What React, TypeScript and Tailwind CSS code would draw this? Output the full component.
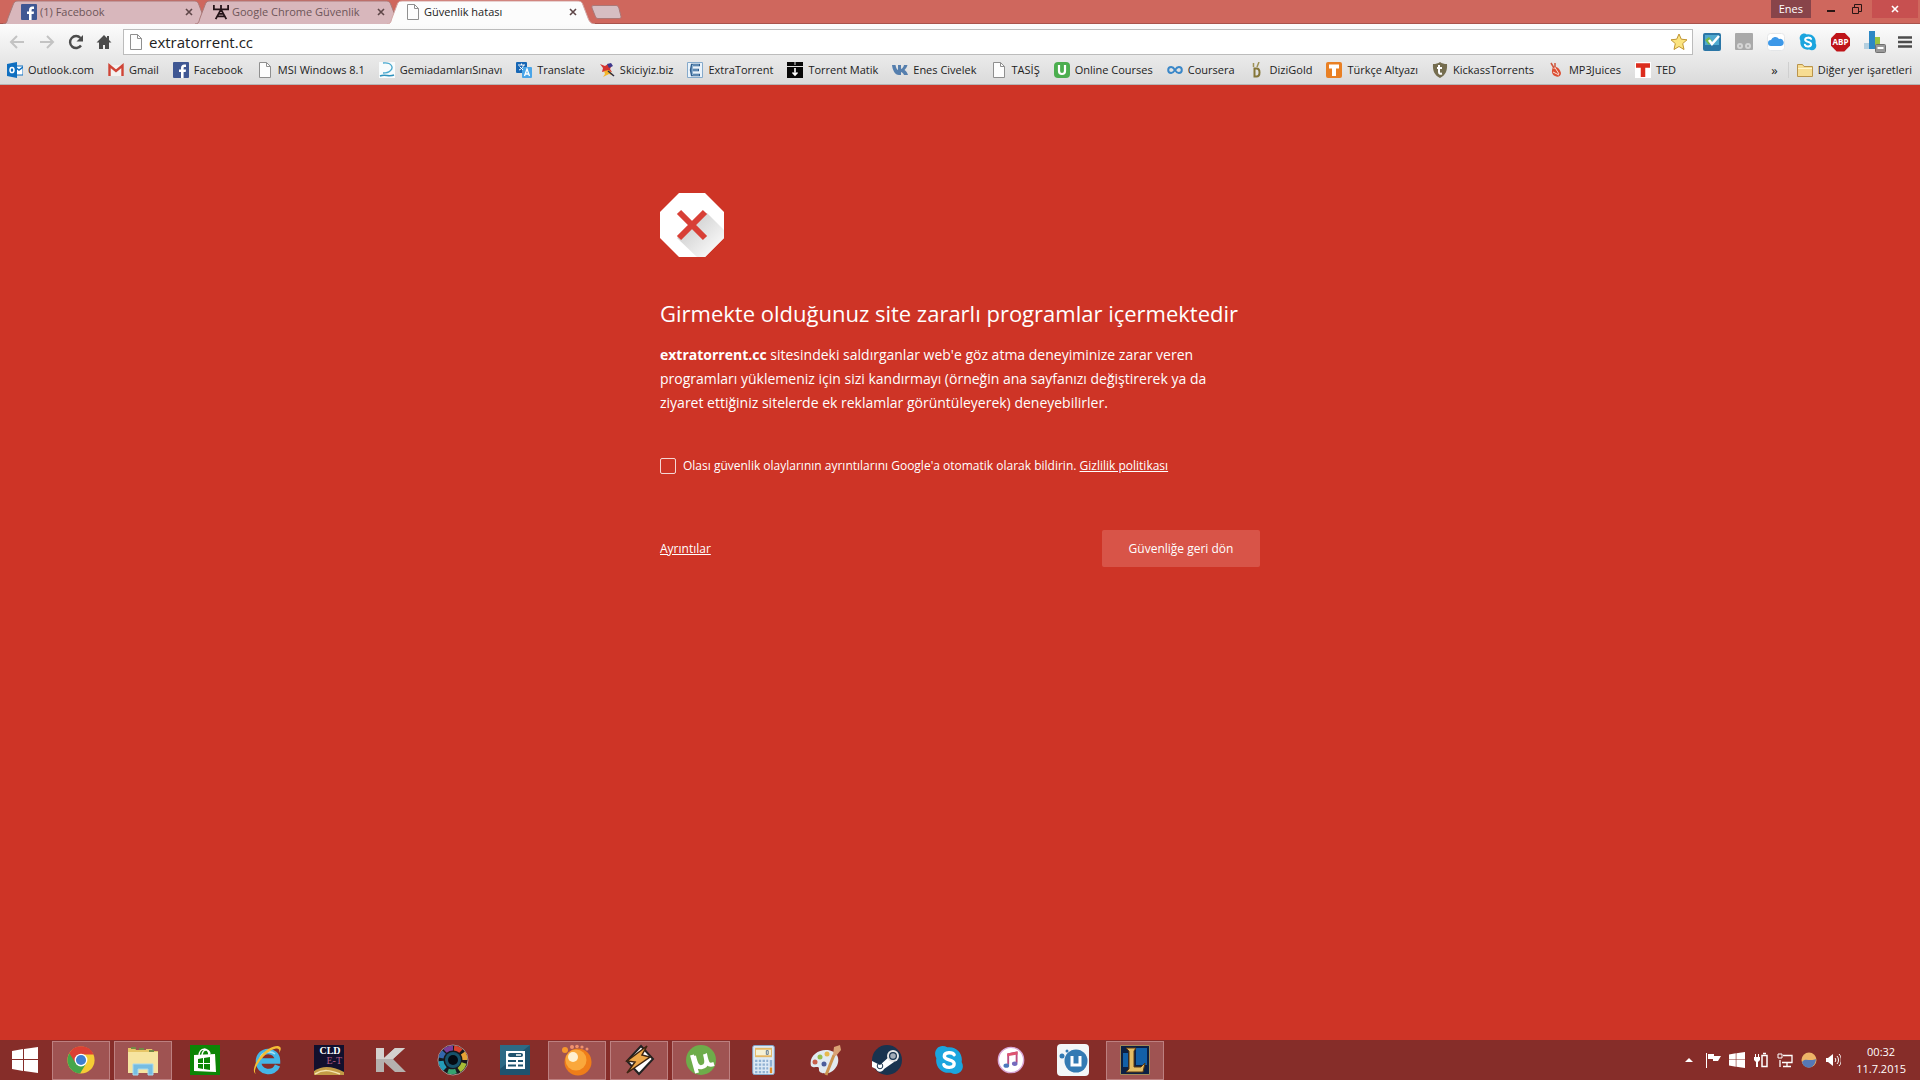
import type { ReactNode } from 'react';

type IconProps = { children: ReactNode; box?: string; className?: string };

function Icon({ children, box = '0 0 16 16', className = 'size-4' }: IconProps) {
    return (
        <svg viewBox={box} className={`shrink-0 ${className}`} fill="none" aria-hidden="true">
            {children}
        </svg>
    );
}

function PageIcon() {
    return (
        <Icon>
            <path d="M2.5 .5h7l4 4v11h-11z" fill="#fdfdfd" stroke="#8f8f8f" />
            <path d="M9.5 .5v4h4" stroke="#8f8f8f" />
        </Icon>
    );
}

function FacebookIcon() {
    return (
        <Icon>
            <rect width="16" height="16" rx="1" fill="#3f5793" />
            <path d="M8 16V10H6V7.500h2V6c0-2.300 1.300-3.500 3.300-3.500H13V5h-1.200c-.9 0-1.200.4-1.200 1.200v1.300H13L12.700 10h-2.100v6z" fill="#fff" />
        </Icon>
    );
}

function TowerIcon() {
    return (
        <Icon box="0 0 18 18">
            <path d="M1 1v5h16V1M9 1v6M9 6 3 17M9 6l6 11M6 11h6M4 14h10" stroke="#251418" strokeWidth="2" />
        </Icon>
    );
}

const bookmarks: { label: string; icon: ReactNode }[] = [
    {
        label: 'Outlook.com',
        icon: (
            <Icon>
                <path d="M8 4h8v9H8z" fill="#fff" stroke="#0f6fc0" />
                <path d="m8 5 4 3 4-3" stroke="#0f6fc0" strokeWidth="1.500" />
                <path d="M0 2 10 0v16L0 14z" fill="#0f6fc0" />
                <ellipse cx="5" cy="8" rx="2" ry="2.600" stroke="#fff" strokeWidth="1.500" />
            </Icon>
        ),
    },
    {
        label: 'Gmail',
        icon: (
            <Icon>
                <path d="M1 3h14v11H1z" fill="#f4f1f0" />
                <path d="M1.500 14V3.500L8 9l6.500-5.500V14" stroke="#cf4436" strokeWidth="2.400" />
            </Icon>
        ),
    },
    { label: 'Facebook', icon: <FacebookIcon /> },
    { label: 'MSI Windows 8.1', icon: <PageIcon /> },
    {
        label: 'GemiadamlarıSınavı',
        icon: (
            <Icon>
                <path d="M0 0h16v16H0z" fill="#f8fbfc" />
                <path d="M4 1c9-1 11 5 7 8-2 2-5 2-7 2" stroke="#49a9cf" strokeWidth="1.300" />
                <path d="M1 14c5-2 9 1 14-1" stroke="#2f92bd" strokeWidth="1.500" />
            </Icon>
        ),
    },
    {
        label: 'Translate',
        icon: (
            <Icon>
                <rect width="11" height="11" rx="1" fill="#1767b5" />
                <rect x="6" y="5" width="10" height="11" rx="1" fill="#4aa5e8" />
                <path d="M2 3h7M5.500 1.500V3M3 8c3-1 4-3 4.500-5M3.500 4.500 7 8" stroke="#fff" />
                <path d="m8.500 14 2.500-7 2.500 7M9.500 12h3.500" stroke="#fff" strokeWidth="1.300" />
            </Icon>
        ),
    },
    {
        label: 'Skiciyiz.biz',
        icon: (
            <Icon>
                <path d="m1 2 5 2 3-2 4 1-2 4 2 3-6-1-4 1 1-4z" fill="#d5332f" />
                <path d="m8 2 4-1 2 3-4 2z" fill="#3f3a8c" />
                <path d="m5 9 5-1 5 6-5-2-6 3 2-3z" fill="#f3b52b" />
                <path d="m9 9 6 5" stroke="#2b2b45" strokeWidth="1.500" />
            </Icon>
        ),
    },
    {
        label: 'ExtraTorrent',
        icon: (
            <Icon>
                <path d="M.5 .5h15v15H.5z" fill="#eaf3fb" stroke="#86aacb" />
                <path d="M13 3H5l-1 5 1 5h8M4 8h8" stroke="#2d5c8c" strokeWidth="2.400" />
                <path d="M12 3H5.500L5 8l.5 5H12M5 8h6" stroke="#a8cbe9" strokeWidth=".8" />
            </Icon>
        ),
    },
    {
        label: 'Torrent Matik',
        icon: (
            <Icon>
                <path d="M0 0h16v16H0z" fill="#080808" />
                <path d="M0 4.500h16M8 0v3" stroke="#ddd" />
                <path d="M8 6v7M5.500 10.500 8 13l2.500-2.500" stroke="#fff" strokeWidth="1.600" />
            </Icon>
        ),
    },
    {
        label: 'Enes Civelek',
        icon: (
            <Icon>
                <path d="M0 3h3.500c.5 3 1.500 4.500 2.500 5V3h3v4c1.500-.5 2.500-2 3-4h3.500c-.5 2-2 4-3 5 1.300.8 2.700 2.500 3.500 5h-4c-.5-1.500-1.500-2.500-3-3v3H7C3 13 .5 8 0 3z" fill="#557fae" />
            </Icon>
        ),
    },
    { label: 'TASİŞ', icon: <PageIcon /> },
    {
        label: 'Online Courses',
        icon: (
            <Icon>
                <rect width="16" height="16" rx="4" fill="#4cae4f" />
                <path d="M5 3v6a3 3 0 0 0 6 0V3" stroke="#fff" strokeWidth="2.200" />
            </Icon>
        ),
    },
    {
        label: 'Coursera',
        icon: (
            <Icon>
                <path d="M8 8C6.500 5.500 5.500 5 4.200 5a3 3 0 0 0 0 6C6 11 7 9.500 8 8s2-3 3.800-3a3 3 0 0 1 0 6C10.500 11 9.500 10.500 8 8z" stroke="#3a87c8" strokeWidth="2" />
            </Icon>
        ),
    },
    {
        label: 'DiziGold',
        icon: (
            <Icon>
                <path d="M5.500 6.500h2c4 0 4 8 0 8h-2z" stroke="#857638" strokeWidth="2" />
                <path d="M4.500 1v4M10 0 8 5" stroke="#9e9256" strokeWidth="1.500" />
            </Icon>
        ),
    },
    {
        label: 'Türkçe Altyazı',
        icon: (
            <Icon>
                <rect width="16" height="16" rx="2" fill="#e98024" />
                <path d="M3 4.500h10M8 4v10" stroke="#fff" strokeWidth="4" />
            </Icon>
        ),
    },
    {
        label: 'KickassTorrents',
        icon: (
            <Icon>
                <path d="M8 0c2 1.500 4 2 7 2 .5 6-1 11-7 14C2 13 .5 8 1 2c3 0 5-.5 7-2z" fill="#756d4f" />
                <path d="M7 3v7c0 1.500 1 2 3 1.500M5 6h5" stroke="#fff" strokeWidth="2" />
            </Icon>
        ),
    },
    {
        label: 'MP3Juices',
        icon: (
            <Icon>
                <path d="M5 5c4-1 7 2 8 6 0 3-3 5-6 3-3-1-4-5-2-9z" fill="#dc4e32" />
                <path d="M6 7V4l5 8M5 10l6 3" stroke="#fbe1d8" />
                <path d="M3 1 6 6M7 1v4" stroke="#cf563c" strokeWidth="1.500" />
            </Icon>
        ),
    },
    {
        label: 'TED',
        icon: (
            <Icon>
                <path d="M0 0h16v16H0z" fill="#fff" />
                <path d="M1 3.500h14M8 3v12" stroke="#dc2d1e" strokeWidth="4.500" />
            </Icon>
        ),
    },
];

function ChromeIcon() {
    return (
        <Icon box="0 0 32 32" className="size-[30px]">
            <circle cx="16" cy="16" r="14.500" fill="#f5cc35" />
            <path d="M16 16 3.500 8.700A14.500 14.500 0 0 0 15 30.500l6.500-10.800z" fill="#45a64a" />
            <path d="M3.500 8.700a14.500 14.500 0 0 1 26 1.300H16l-6.500 8z" fill="#dc4034" />
            <circle cx="16" cy="16" r="6.800" fill="#fff" />
            <circle cx="16" cy="16" r="5.400" fill="#3f7fd0" />
        </Icon>
    );
}

function SkypeIcon({ className }: { className: string }) {
    return (
        <Icon box="0 0 32 32" className={className}>
            <path d="M9 1a8 8 0 0 1 5 1.500C24 1 31 9 29.500 18 34 26 26 34 18 29.500 8 31 1 23 2.500 14-1 8 3 1 9 1z" fill="#1ba5de" />
            <path d="M21.500 10.500C20 7.500 11 7 11 12c0 5 10.500 2.500 10.500 8 0 5-9.500 5-11 1" stroke="#fff" strokeWidth="3.600" strokeLinecap="round" />
        </Icon>
    );
}

const taskbarApps: { name: string; running?: boolean; icon: ReactNode }[] = [
    { name: 'Google Chrome', running: true, icon: <ChromeIcon /> },
    {
        name: 'File Explorer',
        running: true,
        icon: (
            <Icon box="0 0 32 32" className="size-8">
                <path d="M1 4h7l1 2h10V5h6l1 2h5v21H1z" fill="#e7c667" />
                <path d="M4 3h5v2H4zM12 4h5v2h-5zM22 6h5v2h-5z" fill="#738845" />
                <path d="M1 8h30v21H1z" fill="#f6e4a0" />
                <path d="M6 31V20h20v11h-5v-6H11v6z" fill="#76bde2" stroke="#a9daef" />
            </Icon>
        ),
    },
    {
        name: 'Store',
        icon: (
            <Icon box="0 0 32 32" className="size-8">
                <path d="M1 1h30v30H1z" fill="#0c8506" />
                <path d="m5 11 21-1 1 18-22-1z" fill="#fff" />
                <path d="M10 12c0-9 10-9 10-1M13 11c1-7 7-6 8-1" stroke="#fff" strokeWidth="1.500" />
                <path d="m9 15 5-1v5H9zm6-1 6-1v6h-6zm-6 6h5v5l-5-1zm6 0h6v6l-6-1z" fill="#0c8506" />
            </Icon>
        ),
    },
    {
        name: 'Internet Explorer',
        icon: (
            <Icon box="0 0 32 32" className="size-8">
                <path d="M26.500 21.500C23 31 7.500 29 7.500 17.500c0-13 19-13.500 19-.5H10" stroke="#45b5e6" strokeWidth="5.500" />
                <path d="M9 14c2-6 10-8 15-4" stroke="#a5e2f7" strokeWidth="1.500" />
                <path d="M5 30C-3 27 13 1 27 2c4 1 3 4 1 7 1-3 0-5-3-4.500C15 6 0 26 5 30z" fill="#f5bd35" />
            </Icon>
        ),
    },
    {
        name: 'CLD E-T',
        icon: (
            <span className="flex size-[30px] flex-col bg-[#12102d] font-['Liberation_Serif',serif] text-[10px] leading-[10px]">
                <span className="pl-[2px] pt-px font-bold text-white">CLD</span>
                <span className="pr-[2px] text-right text-[#b45a82]">E-T</span>
                <Icon box="0 0 30 9" className="h-[9px] w-[30px]">
                    <path d="M0 5C9-1 18 0 30 6v3H0z" fill="#c39b45" />
                    <path d="M1 8c8-5 15-4 25 0" stroke="#f4e3ae" strokeWidth="1.500" />
                </Icon>
            </span>
        ),
    },
    {
        name: 'K',
        icon: (
            <Icon box="0 0 32 32" className="size-8">
                <path d="M1 4h8v10L20 4h10L18 15l13 13H20L9 18v10H1z" fill="#b5b1ae" />
                <path d="M1 4h8v10L20 4h10L18 15H1z" fill="#d4d1ce" />
            </Icon>
        ),
    },
    {
        name: 'Color wheel',
        icon: (
            <Icon box="0 0 32 32" className="size-8">
                <circle cx="16" cy="16" r="15" fill="#16171d" stroke="#ddd" strokeWidth=".6" />
                <path d="M8 7a12 12 0 0 1 8-3" stroke="#7b3c98" strokeWidth="5" />
                <path d="M17 4a12 12 0 0 1 7 3" stroke="#d7402c" strokeWidth="5" />
                <path d="M26 9a12 12 0 0 1 2 7" stroke="#e8a235" strokeWidth="5" />
                <path d="M27 19a12 12 0 0 1-5 7" stroke="#a6bb36" strokeWidth="5" />
                <path d="M19 27a12 12 0 0 1-8 0" stroke="#37a270" strokeWidth="5" />
                <path d="M8 25a12 12 0 0 1-4-8" stroke="#249cb8" strokeWidth="5" />
                <path d="M4 14a12 12 0 0 1 3-6" stroke="#3266ad" strokeWidth="5" />
                <circle cx="16" cy="16" r="8" fill="#17526b" />
                <circle cx="16" cy="16" r="5" fill="#050a12" />
            </Icon>
        ),
    },
    {
        name: 'Control panel',
        icon: (
            <Icon box="0 0 32 32" className="size-8">
                <path d="M1 1h30v30H1z" fill="#1f536e" />
                <path d="M1 1h30L1 25z" fill="#2d6a85" />
                <path d="M7 7h19v18H7z" fill="#fff" />
                <rect x="9" y="9" width="15" height="4" rx="2" fill="#1f536e" />
                <path d="M17 11h5" stroke="#fff" strokeWidth="1.500" />
                <path d="M9 17h8M9 21.500h8M19 17h5M19 21.500h5" stroke="#1f536e" strokeWidth="2" />
            </Icon>
        ),
    },
    {
        name: 'GOM Player',
        running: true,
        icon: (
            <Icon box="0 0 32 32" className="size-8">
                <circle cx="4" cy="6" r="3" fill="#f6962d" />
                <circle cx="11" cy="3" r="2" fill="#f2916d" />
                <circle cx="16" cy="2.500" r="1.800" fill="#f2916d" />
                <circle cx="21" cy="3" r="1.600" fill="#f2916d" />
                <circle cx="26" cy="5" r="1.500" fill="#f2916d" />
                <circle cx="17" cy="18" r="13.500" fill="#ef7d19" />
                <circle cx="15" cy="16" r="10.500" fill="#faa83c" />
                <circle cx="12" cy="13" r="5" fill="#fff0cf" />
            </Icon>
        ),
    },
    {
        name: 'Winamp',
        running: true,
        icon: (
            <Icon box="0 0 32 32" className="size-8">
                <path d="M18 2 30 15 16 30 4 17z" fill="#fff" stroke="#222" strokeWidth="2" />
                <path d="M24 2 4 17l8 1-8 11 23-16-8-2z" fill="#eda747" stroke="#3c2411" strokeWidth="1.500" />
            </Icon>
        ),
    },
    {
        name: 'uTorrent',
        running: true,
        icon: (
            <Icon box="0 0 32 32" className="size-8">
                <circle cx="16" cy="16" r="15" fill="#6eac4a" />
                <path d="m7 11 5 18M9 12c2 9 4 12 8 11 5-1 5-5 3-13M20 10c2 10 3 12 9 10" stroke="#fff" strokeWidth="4" />
            </Icon>
        ),
    },
    {
        name: 'Calculator',
        icon: (
            <Icon box="0 0 24 32" className="h-[30px] w-[23px]">
                <rect x=".5" y=".5" width="23" height="31" rx="2" fill="#dce9f5" stroke="#80a9d0" />
                <path d="M3 3h18v10H3z" fill="#e5b663" />
                <path d="M4 5h16v6H4z" fill="#f6f1d4" />
                <path d="M15 6h2v4h-2z" stroke="#56738f" />
                <path d="M3 17h14M3 21h14M3 25h14M3 29h14" stroke="#8fb0d2" strokeWidth="2.400" strokeDasharray="2.500 1.500" />
                <path d="M20 16v7" stroke="#8fb0d2" strokeWidth="2.500" />
                <path d="M20 24v6" stroke="#e08d2d" strokeWidth="2.500" />
            </Icon>
        ),
    },
    {
        name: 'Paint',
        icon: (
            <Icon box="0 0 32 32" className="size-8">
                <path d="M2 22C-1 10 14 2 25 8c7 4 5 16-3 20-6 3-13 1-12-3 0-4-5 0-8-3z" fill="#e1eaf0" />
                <circle cx="6" cy="18" r="2.500" fill="#c8604b" />
                <circle cx="11" cy="13" r="2.500" fill="#96bd4c" />
                <circle cx="18" cy="10" r="2.500" fill="#e6b94c" />
                <circle cx="15" cy="20" r="2.500" fill="#4b5d9a" />
                <path d="m17 31 8-20" stroke="#cc9550" strokeWidth="3" />
                <path d="m24 11 1-8 6-2 1 5-5 6z" fill="#d9a274" />
            </Icon>
        ),
    },
    {
        name: 'Steam',
        icon: (
            <Icon box="0 0 32 32" className="size-8">
                <circle cx="16" cy="16" r="15" fill="#19334f" />
                <path d="m1 17 8 4 10-9 4 6-10 7c-2 4-7 3-8 0l-4-2z" fill="#fff" />
                <circle cx="22" cy="12" r="6" fill="#e6e6e6" />
                <circle cx="22" cy="12" r="4" fill="#19334f" />
                <circle cx="22" cy="12" r="2.800" fill="#a3acb7" />
                <circle cx="9" cy="22" r="2.800" stroke="#19334f" />
            </Icon>
        ),
    },
    { name: 'Skype', icon: <SkypeIcon className="size-[30px]" /> },
    {
        name: 'iTunes',
        icon: (
            <Icon box="0 0 32 32" className="size-[30px]">
                <circle cx="16" cy="16" r="13.500" fill="#fff" stroke="#d7a5d5" strokeWidth="1.500" />
                <path d="M13 21v-11l9-2v11" stroke="#b94f83" strokeWidth="2" />
                <path d="m12 9 11-2v3l-11 2z" fill="#de5370" />
                <ellipse cx="11" cy="22" rx="3" ry="2.300" fill="#4b79bd" />
                <ellipse cx="20" cy="20" rx="3" ry="2.300" fill="#756abd" />
            </Icon>
        ),
    },
    {
        name: 'uCoz',
        icon: (
            <Icon box="0 0 32 32" className="size-8">
                <rect width="32" height="32" rx="4" fill="#f3f6f8" />
                <circle cx="19" cy="17" r="11.500" fill="#337ab3" />
                <circle cx="5" cy="12" r="2.500" fill="#337ab3" />
                <circle cx="10" cy="7" r="1.500" fill="#337ab3" />
                <path d="M15 12v9h8v-9" stroke="#fff" strokeWidth="3" />
            </Icon>
        ),
    },
    {
        name: 'League of Legends',
        running: true,
        icon: (
            <Icon box="0 0 32 32" className="size-8">
                <path d="M1.500 1.500h29v29h-29z" fill="#0b2044" stroke="#a58a58" />
                <path d="M17 4h11v17H17zM4 9h5v14H4z" fill="#1260a8" />
                <path d="M7 4h10l-2 3v16h7l4-4-2 9H7l3-3V7z" fill="#e4bd64" stroke="#5c3a12" />
            </Icon>
        ),
    },
];

const tabs: { title: string; icon: ReactNode; active?: boolean }[] = [
    { title: '(1) Facebook', icon: <FacebookIcon /> },
    { title: 'Google Chrome Güvenlik', icon: <TowerIcon /> },
    { title: 'Güvenlik hatası', icon: <PageIcon />, active: true },
];

function TabStrip() {
    return (
        <div className="flex h-6 items-end border-b border-[#a9534c] bg-[#cf675d] pl-[3px]">
            {tabs.map((tab) => (
                <div
                    key={tab.title}
                    className={`relative -mb-px -mr-4 flex h-6 w-[208px] items-center gap-[3px] pl-[18px] pr-[18px] ${tab.active ? 'z-10' : ''}`}
                >
                    <svg viewBox="0 0 208 24" className="absolute inset-0 size-full" preserveAspectRatio="none" aria-hidden="true">
                        <path
                            d="M0 24C4 24 4 21 5 18L10 5C11 2 12 1 15 1H190C194 1 195 2 196 5L201 18C202 21 204 24 208 24"
                            fill={tab.active ? '#fcfcfc' : '#d8b7bc'}
                            stroke={tab.active ? '#d3a5a3' : '#a97978'}
                        />
                    </svg>
                    <span className="relative">{tab.icon}</span>
                    <button
                        type="button"
                        className={`relative min-w-0 flex-1 overflow-hidden whitespace-nowrap text-left text-[11px] leading-5 ${tab.active ? 'text-[#222]' : 'text-[#6d5558]'}`}
                    >
                        {tab.title}
                    </button>
                    <button type="button" aria-label="Sekmeyi kapat" className="relative">
                        <Icon box="0 0 8 8" className="size-2">
                            <path d="m1 1 6 6M7 1 1 7" stroke="#5e4648" strokeWidth="1.600" />
                        </Icon>
                    </button>
                </div>
            ))}
            <button type="button" aria-label="Yeni sekme" className="mb-1 ml-3">
                <Icon box="0 0 31 14" className="h-[14px] w-[31px]">
                    <path d="M3 .5h22c2 0 2 1 3 3l2 8c0 1 0 2-2 2H7c-2 0-2-1-3-3L1 3C.5 1 1 .5 3 .5z" fill="#d6bdc2" stroke="#ab7776" />
                </Icon>
            </button>
            <div className="ml-auto flex items-start self-start pr-[2px]">
                <button type="button" className="mr-[6px] h-[18px] bg-[#88444a] px-2 text-[11px] leading-[18px] text-white">
                    Enes
                </button>
                <button type="button" aria-label="Küçült" className="flex h-[18px] w-7 items-center justify-center">
                    <span className="mt-1 h-[2px] w-2 bg-[#2a1614]" />
                </button>
                <button type="button" aria-label="Önceki boyut" className="mr-[3px] flex h-[18px] w-6 items-center justify-center">
                    <Icon box="0 0 10 10" className="size-[10px]">
                        <path d="M.5 3.500h6v6h-6zM2.500 3V.5h7v7H7" stroke="#2a1614" />
                    </Icon>
                </button>
                <button type="button" aria-label="Kapat" className="flex h-[18px] w-[46px] items-center justify-center bg-[#c75050]">
                    <Icon box="0 0 8 8" className="size-2">
                        <path d="m1 1 6 6M7 1 1 7" stroke="#fff" strokeWidth="1.600" />
                    </Icon>
                </button>
            </div>
        </div>
    );
}

const extensions: { name: string; icon: ReactNode }[] = [
    {
        name: 'Checker',
        icon: (
            <Icon box="0 0 18 18" className="size-[18px]">
                <rect width="18" height="18" rx="2" fill="#2b76a6" />
                <path d="M2 2h14v10H2z" fill="#4fa9cf" />
                <path d="m2 7 4-3 3 4-3 4z" fill="#77ba4a" />
                <path d="m6 7 3 4 7-8" stroke="#fff" strokeWidth="2.600" />
            </Icon>
        ),
    },
    {
        name: 'Tampermonkey',
        icon: (
            <Icon box="0 0 18 18" className="size-[18px]">
                <rect width="18" height="17" rx="1" fill="#a9a9a9" />
                <circle cx="5" cy="13" r="3" fill="#d5d5d5" />
                <circle cx="13" cy="13" r="3" fill="#d5d5d5" />
                <circle cx="5" cy="13" r="1" fill="#a9a9a9" />
                <circle cx="13" cy="13" r="1" fill="#a9a9a9" />
            </Icon>
        ),
    },
    {
        name: 'iCloud',
        icon: (
            <Icon box="0 0 18 18" className="size-[18px]">
                <rect x=".5" y=".5" width="17" height="17" rx="3" fill="#fff" stroke="#e4e6e8" />
                <path d="M4 13a3 3 0 0 1 0-6 4.500 4.500 0 0 1 8-1 3.600 3.600 0 0 1 2 7z" fill="#3d98e8" />
            </Icon>
        ),
    },
    { name: 'Skype', icon: <SkypeIcon className="size-[18px]" /> },
    {
        name: 'Adblock Plus',
        icon: (
            <span className="flex size-[19px] items-center justify-center bg-[#bf1419] text-[8px] font-bold text-white [clip-path:polygon(30%_0,70%_0,100%_30%,100%_70%,70%_100%,30%_100%,0_70%,0_30%)]">
                ABP
            </span>
        ),
    },
    {
        name: 'Statistics',
        icon: (
            <Icon box="0 0 22 22" className="size-[22px]">
                <path d="M0 12h5v6H0z" fill="#b4cfdf" />
                <path d="M5 0h6v18H5z" fill="#2d88c4" />
                <path d="M11 6h5v12h-5z" fill="#9bc342" />
                <rect x="11.500" y="13.500" width="10" height="8" rx="1" fill="#999" stroke="#707070" />
                <path d="M13.500 17h6" stroke="#fff" strokeWidth="2" />
            </Icon>
        ),
    },
];

function Toolbar() {
    return (
        <div className="flex h-9 items-center pl-[9px] pr-2">
            <button type="button" aria-label="Geri">
                <Icon>
                    <path d="M15 8H2m6-6L2 8l6 6" stroke="#c3c3c3" strokeWidth="2" />
                </Icon>
            </button>
            <button type="button" aria-label="İleri" className="ml-[14px]">
                <Icon>
                    <path d="M1 8h13M8 2l6 6-6 6" stroke="#c3c3c3" strokeWidth="2" />
                </Icon>
            </button>
            <button type="button" aria-label="Yenile" className="ml-[13px]">
                <Icon>
                    <path d="M13 11.500a6 6 0 1 1-.5-7.500" stroke="#4c4c4c" strokeWidth="2.400" />
                    <path d="M15 1v6.500H8.500z" fill="#4c4c4c" />
                </Icon>
            </button>
            <button type="button" aria-label="Ana sayfa" className="ml-3">
                <Icon>
                    <path d="M8 1 .5 8.500H3V15h4v-4h2v4h4V8.500h2.500L13 6V2h-2v2z" fill="#4c4c4c" />
                </Icon>
            </button>
            <div className="ml-[11px] flex h-[26px] flex-1 items-center gap-[5px] border border-[#bcbcbc] bg-white pl-1 pr-1">
                <PageIcon />
                <input
                    type="text"
                    aria-label="Adres"
                    defaultValue="extratorrent.cc"
                    className="min-w-0 flex-1 bg-transparent text-[15px] leading-6 text-[#222] outline-none"
                />
                <button type="button" aria-label="Yer işareti">
                    <Icon box="0 0 18 18" className="size-[18px]">
                        <path d="m9 1 2.300 5.200 5.700.6-4.300 3.800 1.300 5.900L9 13.500l-5 3 1.300-5.900L1 6.800l5.700-.6z" fill="#fbe480" stroke="#c29632" />
                    </Icon>
                </button>
            </div>
            <div className="ml-[10px] flex items-center gap-[14px]">
                {extensions.map((ext) => (
                    <button key={ext.name} type="button" aria-label={ext.name}>
                        {ext.icon}
                    </button>
                ))}
            </div>
            <button type="button" aria-label="Menü" className="ml-3">
                <Icon box="0 0 14 14" className="size-[14px]">
                    <path d="M0 2.500h14M0 7h14M0 11.500h14" stroke="#4c4c4c" strokeWidth="2.600" />
                </Icon>
            </button>
        </div>
    );
}

function BookmarksBar() {
    return (
        <nav className="flex h-[25px] items-center border-b border-[#b4b4b4] pb-1 pl-[7px] pr-2 text-[11px] leading-4 text-[#222]">
            <div className="flex items-center gap-[14px]">
                {bookmarks.map((item) => (
                    <a key={item.label} href="#" className="flex items-center gap-[5px] whitespace-nowrap">
                        {item.icon}
                        {item.label}
                    </a>
                ))}
            </div>
            <button type="button" className="ml-auto mr-[10px] text-[13px]">
                »
            </button>
            <a href="#" className="flex items-center gap-[5px] whitespace-nowrap border-l border-[#cfcfcf] pl-2">
                <Icon>
                    <path d="M.5 14.500v-12h5l1.500 2h8.500v10z" fill="#f7dc92" stroke="#ba944b" />
                    <path d="M1 6.500h14" stroke="#fff3cb" />
                </Icon>
                Diğer yer işaretleri
            </a>
        </nav>
    );
}

function SecurityWarning() {
    return (
        <main className="flex flex-1 justify-center bg-[#ce3426] pt-[108px] text-white">
            <div className="w-full max-w-[600px]">
                <Icon box="0 0 64 64" className="size-16">
                    <defs>
                        <linearGradient id="cross-shadow" x1="24" y1="24" x2="56" y2="56" gradientUnits="userSpaceOnUse">
                            <stop stopColor="#c9c9c9" />
                            <stop offset="1" stopColor="#f7f7f7" />
                        </linearGradient>
                    </defs>
                    <path d="M19 0h26l19 19v26L45 64H19L0 45V19z" fill="#fff" />
                    <path d="m47 20 17 17v8L45 64h-8L17 45z" fill="url(#cross-shadow)" />
                    <path d="m19 19 26 26M45 19 19 45" stroke="#d83f36" strokeWidth="6" />
                </Icon>
                <h1 className="mt-10 text-[22px] leading-8">Girmekte olduğunuz site zararlı programlar içermektedir</h1>
                <p className="mt-[14px] pr-4 text-[14px] leading-6">
                    <strong>extratorrent.cc</strong> sitesindeki saldırganlar web'e göz atma deneyiminize zarar veren programları yüklemeniz için
                    sizi kandırmayı (örneğin ana sayfanızı değiştirerek ya da ziyaret ettiğiniz sitelerde ek reklamlar görüntüleyerek)
                    deneyebilirler.
                </p>
                <div className="mt-[41px] flex items-center gap-[7px] text-[12px] leading-5">
                    <input id="report" type="checkbox" className="size-4 appearance-none rounded-[2px] border border-white/80" />
                    <label htmlFor="report">
                        Olası güvenlik olaylarının ayrıntılarını Google'a otomatik olarak bildirin.{' '}
                        <a href="#" className="underline">
                            Gizlilik politikası
                        </a>
                    </label>
                </div>
                <div className="mt-[54px] flex items-center justify-between text-[12px] leading-5">
                    <a href="#" className="underline">
                        Ayrıntılar
                    </a>
                    <button type="button" className="h-[37px] min-w-[158px] rounded-[2px] bg-[#d85448] px-6">
                        Güvenliğe geri dön
                    </button>
                </div>
            </div>
        </main>
    );
}

function WindowsLogo({ className }: { className: string }) {
    return (
        <Icon box="0 0 26 26" className={className}>
            <path d="m0 4 11-2v10H0zm12-2 14-2v12H12zM0 13h11v11L0 22zm12 0h14v13l-14-2z" fill="#fff" />
        </Icon>
    );
}

function Taskbar() {
    return (
        <footer className="flex h-10 items-center bg-[#862d29]">
            <button type="button" aria-label="Başlat" className="flex w-[52px] justify-center pr-[2px]">
                <WindowsLogo className="size-[26px]" />
            </button>
            <div className="flex items-center gap-1">
                {taskbarApps.map((app) => (
                    <button
                        key={app.name}
                        type="button"
                        aria-label={app.name}
                        className={`flex h-[39px] w-[58px] items-center justify-center ${app.running ? 'border border-[#bd8080] bg-[#9f5352]' : ''}`}
                    >
                        {app.icon}
                    </button>
                ))}
            </div>
            <div className="ml-auto flex items-center gap-2 pr-[14px] text-white">
                <Icon>
                    <path d="m4 10 4-4 4 4z" fill="#fff" />
                </Icon>
                <Icon>
                    <path d="M1.500 1v15" stroke="#fff" />
                    <path d="M3 2h6v2h7l-3 5H8V7H3z" fill="#fff" />
                </Icon>
                <WindowsLogo className="size-4" />
                <Icon>
                    <path d="M2.500 2v3M5.500 2v3" stroke="#fff" />
                    <path d="M1 5h6v3L5 10v5H3v-5L1 8z" fill="#fff" />
                    <path d="M9 3.500h5v11H9zM10 1.500h3" stroke="#fff" strokeWidth="1.500" />
                </Icon>
                <Icon>
                    <path d="M6 3.500h9v7H5M10 11v3M6 14.500h8M3 8v7" stroke="#fff" strokeWidth="1.300" />
                    <path d="M1 2h4v4H1z" stroke="#fff" />
                </Icon>
                <Icon>
                    <circle cx="8" cy="8" r="7.500" fill="#eeb367" />
                    <path d="M1 10c3-5 8 0 14-3-1 11-12 11-14 3z" fill="#5679b7" />
                </Icon>
                <Icon>
                    <path d="M1 6h2l5-4v12L3 10H1z" fill="#fff" />
                    <path d="M10 6c1 1 1 3 0 4M12 4c2 2 2 6 0 8M14 2c3 3 3 9 0 12" stroke="#fff" />
                </Icon>
                <time className="ml-[7px] text-center text-[11px] leading-[17px]">
                    <span className="block">00:32</span>
                    <span className="block">11.7.2015</span>
                </time>
            </div>
        </footer>
    );
}

export default function App() {
    return (
        <div className="flex min-h-screen flex-col font-['Open_Sans','Noto_Sans',sans-serif]">
            <header>
                <TabStrip />
                <div className="bg-linear-to-b from-[#fcfcfc] to-[#dadada]">
                    <Toolbar />
                    <BookmarksBar />
                </div>
            </header>
            <SecurityWarning />
            <Taskbar />
        </div>
    );
}
